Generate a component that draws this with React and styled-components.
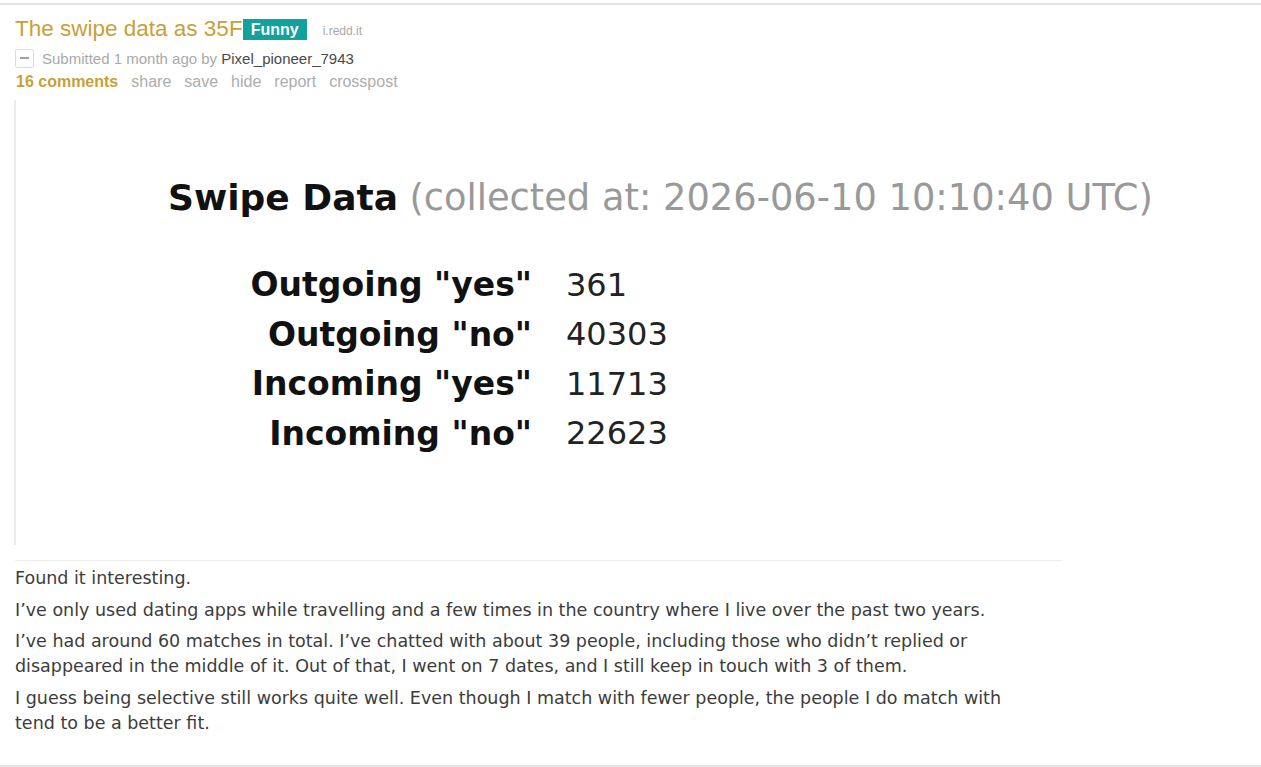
import React from "react";
import styled, { createGlobalStyle } from "styled-components";

const GlobalStyle = createGlobalStyle`
  html, body {
    margin: 0;
    padding: 0;
    background: #ffffff;
  }
  body {
    font-family: "Liberation Sans", Arial, sans-serif;
  }
`;

const swipes = [
  { label: 'Outgoing "yes"', value: "361" },
  { label: 'Outgoing "no"', value: "40303" },
  { label: 'Incoming "yes"', value: "11713" },
  { label: 'Incoming "no"', value: "22623" },
];

const App = () => {
  return (
    <>
      <GlobalStyle />
      <Post>
        <TitleRow>
          <Title href="#">The swipe data as 35F</Title>
          <Flair>Funny</Flair>
          <Domain>i.redd.it</Domain>
        </TitleRow>
        <Tagline>
          <Collapse>
            <span />
          </Collapse>
          Submitted 1 month ago by <Author>Pixel_pioneer_7943</Author>
        </Tagline>
        <Buttons>
          <Comments>16 comments</Comments>
          <Action>share</Action>
          <Action>save</Action>
          <Action>hide</Action>
          <Action>report</Action>
          <Action>crosspost</Action>
        </Buttons>
        <Preview>
          <ChartTitle>
            <strong>Swipe Data</strong> <span>(collected at: 2026-06-10 10:10:40 UTC)</span>
          </ChartTitle>
          <SwipeTable>
            {swipes.map((row) => (
              <React.Fragment key={row.label}>
                <SwipeLabel>{row.label}</SwipeLabel>
                <SwipeValue>{row.value}</SwipeValue>
              </React.Fragment>
            ))}
          </SwipeTable>
        </Preview>
        <Usertext>
          <p>Found it interesting.</p>
          <p>
            I’ve only used dating apps while travelling and a few times in the country where I
            live over the past two years.
          </p>
          <p>
            I’ve had around 60 matches in total. I’ve chatted with about 39 people, including
            those who didn’t replied or disappeared in the middle of it. Out of that, I went on 7
            dates, and I still keep in touch with 3 of them.
          </p>
          <p>
            I guess being selective still works quite well. Even though I match with fewer
            people, the people I do match with tend to be a better fit.
          </p>
        </Usertext>
      </Post>
    </>
  );
};

export default App;

const Post = styled.div`
  margin-top: 3px;
  border-top: 2px solid #e4e4e4;
  border-bottom: 2px solid #e4e4e4;
  padding: 11px 15px 30px 15px;
  height: 764px;
  box-sizing: border-box;
`;

const TitleRow = styled.div`
  display: flex;
  align-items: center;
  height: 26px;
`;

const Title = styled.a`
  font-size: 22.5px;
  color: #c99f38;
  text-decoration: none;
  line-height: 26px;
`;

const Flair = styled.span`
  background: #13a19c;
  color: #ffffff;
  font-weight: bold;
  font-size: 16px;
  line-height: 21px;
  padding: 0 8px;
`;

const Domain = styled.span`
  font-size: 12px;
  color: #a8a8a8;
  margin-left: 16px;
  margin-top: 3px;
`;

const Tagline = styled.div`
  display: flex;
  align-items: center;
  height: 18px;
  margin-top: 7px;
  font-size: 15px;
  color: #a9a9a9;
  white-space: pre;
`;

const Collapse = styled.span`
  width: 17px;
  height: 17px;
  border: 1px solid #dcdcdc;
  border-radius: 2px;
  display: flex;
  align-items: center;
  justify-content: center;
  margin-right: 8px;
  span {
    width: 9px;
    height: 2px;
    background: #a0a0a0;
  }
`;

const Author = styled.span`
  color: #4a4a4a;
`;

const Buttons = styled.div`
  display: flex;
  align-items: center;
  gap: 13px;
  height: 20px;
  margin-top: 5px;
  padding-left: 1px;
  font-size: 16px;
`;

const Comments = styled.span`
  color: #c99f38;
  font-weight: bold;
`;

const Action = styled.span`
  color: #adadad;
`;

const Preview = styled.div`
  height: 445px;
  margin-top: 8px;
  margin-left: -1px;
  border-left: 2px solid #ececec;
  box-sizing: border-box;
  font-family: "DejaVu Sans", sans-serif;
  padding-top: 76px;
`;

const ChartTitle = styled.div`
  padding-left: 152px;
  font-size: 36px;
  line-height: 44px;
  white-space: nowrap;
  strong {
    color: #111111;
    font-weight: bold;
  }
  span {
    color: #999999;
    font-size: 36.8px;
  }
`;

const SwipeTable = styled.div`
  display: grid;
  grid-template-columns: 516px auto;
  grid-auto-rows: 49.5px;
  column-gap: 34px;
  align-items: center;
  margin-top: 40px;
  font-size: 33px;
`;

const SwipeLabel = styled.div`
  justify-self: end;
  font-weight: bold;
  color: #111111;
  white-space: nowrap;
`;

const SwipeValue = styled.div`
  color: #222222;
  font-size: 32px;
`;

const Usertext = styled.div`
  width: 1048px;
  margin-top: 15px;
  border-top: 1px solid #eeeeee;
  padding: 5px 30px 0 0;
  box-sizing: border-box;
  font-family: "DejaVu Sans", Verdana, sans-serif;
  font-size: 17.5px;
  line-height: 25px;
  color: #3c3c3c;
  p {
    margin: 0 0 6.5px 0;
  }
`;
